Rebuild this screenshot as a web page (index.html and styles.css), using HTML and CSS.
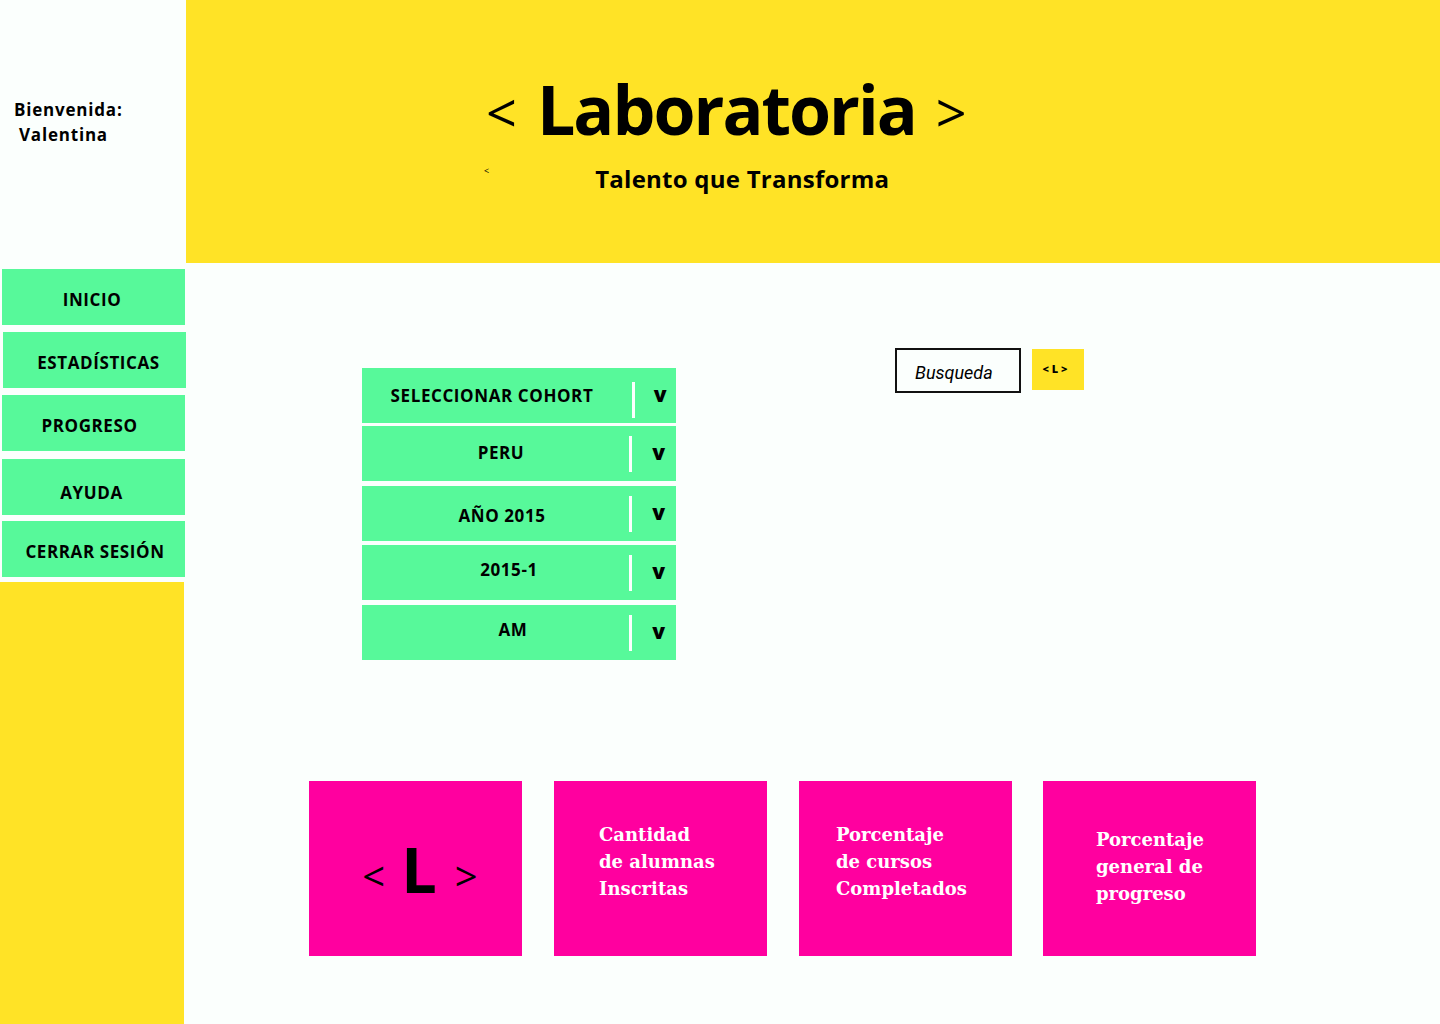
FILE: index.html
```html
<!DOCTYPE html>
<html lang="es">
<head>
<meta charset="utf-8">
<title>Laboratoria</title>
<link rel="stylesheet" href="styles.css">
</head>
<body>
<div class="page">
  <aside class="sidebar">
    <div class="welcome">
      <p class="welcome-line">Bienvenida:</p>
      <p class="welcome-line welcome-name">Valentina</p>
    </div>
    <nav class="nav">
      <a class="nav-item nav-inicio" href="#">INICIO</a>
      <a class="nav-item nav-estad" href="#">ESTADÍSTICAS</a>
      <a class="nav-item nav-progreso" href="#">PROGRESO</a>
      <a class="nav-item nav-ayuda" href="#">AYUDA</a>
      <a class="nav-item nav-cerrar" href="#">CERRAR SESIÓN</a>
    </nav>
    <div class="side-fill"></div>
  </aside>
  <main class="main">
    <header class="header">
      <h1 class="title"><span class="bracket">&lt;</span><span class="title-word">Laboratoria</span><span class="bracket">&gt;</span></h1>
      <div class="sub-row">
        <span class="tiny">&lt;</span>
        <p class="subtitle">Talento que Transforma</p>
      </div>
    </header>
    <section class="content">
      <div class="top-row">
        <div class="selects">
          <div class="select select-first"><span class="select-label">SELECCIONAR COHORT</span><span class="divider"></span><span class="chev">v</span></div>
          <div class="select select-2"><span class="select-label">PERU</span><span class="divider"></span><span class="chev">v</span></div>
          <div class="select select-3"><span class="select-label">AÑO 2015</span><span class="divider"></span><span class="chev">v</span></div>
          <div class="select select-4"><span class="select-label">2015-1</span><span class="divider"></span><span class="chev">v</span></div>
          <div class="select select-5"><span class="select-label">AM</span><span class="divider"></span><span class="chev">v</span></div>
        </div>
        <div class="search">
          <div class="search-box">Busqueda</div>
          <button class="search-btn">&lt; L &gt;</button>
        </div>
      </div>
      <div class="cards">
        <div class="card card-logo"><span class="logo-br">&lt;</span><span class="logo-l">L</span><span class="logo-br">&gt;</span></div>
        <div class="card card-text card-a">Cantidad<br>de alumnas<br>Inscritas</div>
        <div class="card card-text card-b">Porcentaje<br>de cursos<br>Completados</div>
        <div class="card card-text card-c">Porcentaje<br>general de<br>progreso</div>
      </div>
    </section>
  </main>
</div>
</body>
</html>
```

FILE: styles.css
```css
* { box-sizing: border-box; }
html, body { margin: 0; padding: 0; }
body {
  background: #fbfffd;
  font-family: "Open Sans", "Liberation Sans", sans-serif;
  color: #000;
  width: 1440px;
  height: 1024px;
  overflow: hidden;
}
.page {
  display: grid;
  grid-template-columns: 186px 1fr;
  height: 1024px;
}

/* Sidebar */
.sidebar {
  display: flex;
  flex-direction: column;
  height: 1024px;
}
.welcome {
  height: 269px;
  padding: 97px 0 0 14px;
}
.welcome-line {
  margin: 0;
  font-weight: 700;
  font-size: 17px;
  line-height: 25px;
  letter-spacing: 0.8px;
}
.welcome-name { padding-left: 5px; }
.nav {
  display: flex;
  flex-direction: column;
}
.nav-item {
  display: flex;
  align-items: center;
  justify-content: center;
  height: 56px;
  width: 183px;
  margin-left: 2px;
  background: #57f99a;
  color: #000;
  text-decoration: none;
  font-weight: 700;
  font-size: 17px;
  letter-spacing: 0.6px;
  padding-top: 4px;
}
.nav-inicio { padding-right: 3px; }
.nav-estad { margin-top: 7px; margin-left: 3px; padding-left: 8px; }
.nav-progreso { margin-top: 7px; padding-right: 8px; padding-top: 4px; }
.nav-ayuda { margin-top: 8px; padding-top: 10px; padding-right: 4px; }
.nav-cerrar { margin-top: 6px; padding-left: 3px; padding-top: 4px; }
.side-fill {
  flex: 1;
  margin-top: 5px;
  width: 184px;
  background: #ffe326;
}

/* Header */
.main { display: flex; flex-direction: column; }
.header {
  height: 263px;
  background: #ffe326;
  padding-top: 67px;
}
.title {
  margin: 0 0 0 300px;
  display: flex;
  align-items: baseline;
  font-size: 68px;
  line-height: 84px;
  font-weight: 700;
}
.bracket {
  font-weight: 400;
  font-size: 54px;
  position: relative;
  top: -2px;
}
.title-word { margin: 0 20px 0 20px; letter-spacing: -2px; }
.sub-row {
  display: flex;
  align-items: flex-start;
  margin-left: 298px;
  margin-top: 6px;
}
.tiny {
  font-size: 9px;
  line-height: 10px;
  margin-top: 4px;
}
.subtitle {
  margin: 0 0 0 106px;
  font-size: 24px;
  line-height: 34px;
  font-weight: 700;
  letter-spacing: 0.25px;
}

/* Content */
.content { padding-left: 176px; }
.top-row {
  display: flex;
  align-items: flex-start;
}
.selects {
  margin-top: 105px;
  width: 314px;
  display: flex;
  flex-direction: column;
}
.select {
  display: flex;
  align-items: center;
  height: 55px;
  background: #57f99a;
  font-weight: 700;
  font-size: 17px;
  letter-spacing: 0.6px;
}
.select-2 { margin-top: 3px; }
.select-3 { margin-top: 5px; }
.select-4 { margin-top: 4px; }
.select-5 { margin-top: 5px; }
.select-label {
  width: 268px;
  text-align: center;
  padding-left: 10px;
}
.select-first .select-label { padding-left: 0; padding-right: 8px; }
.select-2 .select-label { padding-bottom: 2px; padding-left: 10px; }
.select-3 .select-label { padding-top: 3px; padding-left: 12px; }
.select-4 .select-label { padding-bottom: 6px; padding-left: 26px; }
.select-5 .select-label { padding-bottom: 6px; padding-left: 34px; }
.divider {
  width: 3px;
  height: 36px;
  background: #fbfffd;
  margin-left: 2px;
}
.select-first .divider { margin-left: 2px; margin-top: 8px; }
.select-2 .divider, .select-3 .divider, .select-4 .divider, .select-5 .divider { margin-left: -1px; }
.chev {
  flex: 1;
  text-align: center;
  font-size: 21px;
  font-weight: 800;
  padding-bottom: 4px;
  padding-left: 10px;
}
.search {
  display: flex;
  align-items: flex-start;
  margin-top: 85px;
  margin-left: 219px;
}
.search-box {
  width: 126px;
  height: 45px;
  border: 2px solid #111;
  font-family: Roboto, "Liberation Sans", sans-serif;
  font-style: italic;
  font-size: 18px;
  padding: 12px 0 0 18px;
  background: #fbfffd;
}
.search-btn {
  margin-left: 11px;
  margin-top: 1px;
  width: 52px;
  height: 41px;
  border: 0;
  background: #ffe326;
  font-family: "Open Sans", sans-serif;
  font-weight: 800;
  font-size: 11px;
  padding: 0 6px 2px 0;
  color: #000;
}

/* Cards */
.cards {
  display: flex;
  margin-top: 121px;
  margin-left: -53px;
  gap: 32px;
}
.card {
  width: 213px;
  height: 175px;
  background: #ff009f;
}
.card-c { margin-left: -1px; }
.card-logo {
  display: flex;
  align-items: center;
  justify-content: center;
  padding-left: 9px;
}
.logo-br {
  font-size: 40px;
  font-weight: 400;
  margin-top: 14px;
}
.logo-l {
  font-size: 63px;
  font-weight: 700;
  margin: 0 18px 0 16px;
  line-height: 1;
}
.card-text {
  color: #fff;
  font-family: "DejaVu Serif", "Liberation Serif", serif;
  font-weight: 700;
  font-size: 18px;
  line-height: 27px;
  letter-spacing: 0;
}
.card-a { padding: 40px 0 0 45px; }
.card-b { padding: 40px 0 0 37px; }
.card-c { padding: 45px 0 0 53px; }
```
